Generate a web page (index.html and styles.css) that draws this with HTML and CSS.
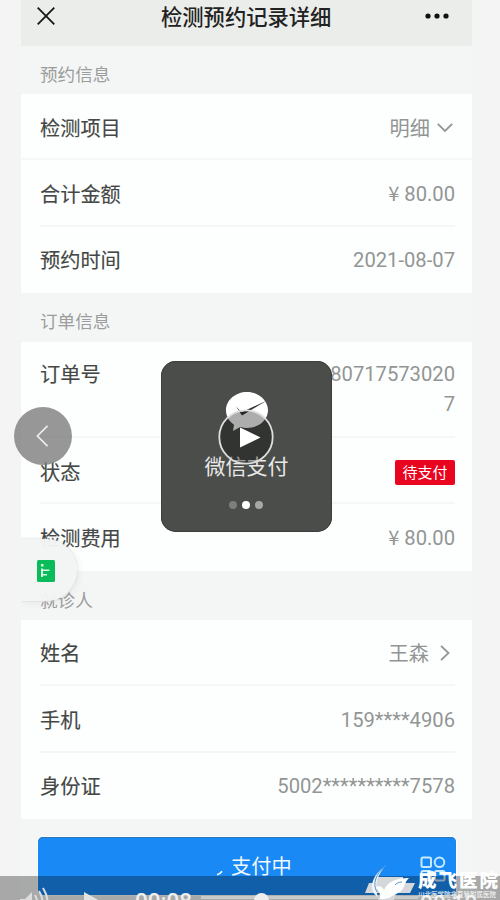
FILE: index.html
```html
<!DOCTYPE html>
<html lang="zh-CN">
<head>
<meta charset="utf-8">
<title>检测预约记录详细</title>
<link rel="stylesheet" href="styles.css">
</head>
<body>
<main class="phone">
  <header class="bar">
    <svg class="close" viewBox="0 0 18 18"><path d="M.7.7 17.3 17.3M17.3.7.7 17.3"/></svg>
    <h1>检测预约记录详细</h1>
    <svg class="more" viewBox="0 0 24 6"><circle cx="3" cy="3" r="2.6"/><circle cx="12" cy="3" r="2.6"/><circle cx="21" cy="3" r="2.6"/></svg>
  </header>
  <h2>预约信息</h2>
  <section class="group">
    <div class="row full"><span class="label">检测项目</span><span class="value cn">明细<svg class="down" viewBox="0 0 16 9"><path d="m.8.8 7.2 7.2L15.2.8"/></svg></span></div>
    <div class="row"><span class="label">合计金额</span><span class="value"><i class="yen">¥</i>80.00</span></div>
    <div class="row"><span class="label">预约时间</span><span class="value">2021-08-07</span></div>
  </section>
  <h2 class="order-head">订单信息</h2>
  <section class="group">
    <div class="row tall"><span class="label">订单号</span><span class="value number">80717573020<br>7</span></div>
    <div class="row"><span class="label">状态</span><span class="tag">待支付</span></div>
    <div class="row"><span class="label">检测费用</span><span class="value"><i class="yen">¥</i>80.00</span></div>
  </section>
  <h2 class="patient-head">就诊人</h2>
  <section class="group">
    <div class="row"><span class="label">姓名</span><span class="value cn">王森<svg class="right" viewBox="0 0 10 16"><path d="m1 .8 7.5 7.2L1 15.2"/></svg></span></div>
    <div class="row"><span class="label">手机</span><span class="value">159****4906</span></div>
    <div class="row"><span class="label">身份证</span><span class="value">5002**********7578</span></div>
  </section>
  <footer>
    <div class="pay">
      <svg class="spin" viewBox="0 0 7 6"><path d="M1 4.8Q4 4 6 1.2"/></svg>
      <span>支付中</span>
      <svg class="apps" viewBox="0 0 26 26"><rect x="1.5" y="1.5" width="9.5" height="9.5" rx="1.5"/><circle cx="19.5" cy="6.3" r="4.8"/><rect x="1.5" y="15" width="9.5" height="9.5" rx="1.5"/><rect x="15" y="15" width="9.5" height="9.5" rx="1.5"/></svg>
    </div>
  </footer>
</main>

<div class="drawer"><svg viewBox="0 0 18 22"><rect width="18" height="22" rx="1.5" fill="#08bd59"/><path d="M4 4h2.500v2.500H4zM4 8.500h2V17H4zM6 9.500h3V11H6zM6 14h4v1.500H6zM8 9.500h4.500V11H8z" fill="#d9f7e4"/></svg></div>

<div class="toast">
  <svg class="chat" viewBox="0 0 44 42"><path d="M22 1C10.400 1 1 9.200 1 19.300c0 6 3 11 8 14.500L8 40l7.200-4c2.200.7 4.400 1 6.800 1 11.600 0 21-7.900 21-17.700S33.600 1 22 1Z" fill="#fff"/><path d="m11 15.500 5.500 5.700L42 9.500 17 24.500Z" fill="#343634"/></svg>
  <span>微信支付</span>
  <div class="dots"><b></b><b></b><b></b></div>
</div>
<div class="play"><svg viewBox="0 0 56 56"><circle cx="28" cy="28" r="26.700" fill="rgba(0,0,0,.32)" stroke="#dedede" stroke-width="1.800"/><path d="M22 18.500 42.500 28.500 22 38.500Z" fill="#fff"/></svg></div>
<div class="prev"><svg viewBox="0 0 14 24"><path d="M13 1 2 12l11 11"/></svg></div>

<div class="player">
  <svg class="sound" viewBox="0 0 30 24"><path d="M1 8h5l7-7v22l-7-7H1Z" fill="#ddd"/><path d="M16 4q4 7 0 14M20 0q7 11 0 22M24-3q9 14 0 28" fill="none" stroke="#ddd" stroke-width="2"/></svg>
  <svg class="mini" viewBox="0 0 16 18"><path d="M0 0 16 9 0 18Z" fill="#e3e3e3"/></svg>
  <span class="time">00:08</span>
  <div class="track"><b class="knob"></b></div>
  <span class="time end">00:10</span>
</div>
<div class="brand">
  <svg viewBox="0 0 50 36"><path d="M13 12h25v6h12l-5 10H31l-2 7H13l2-7H0l4-10h7Z" fill="#d5d8da"/><path d="M21 0C12 7 6 15 7 24c1 4 3 6 6 8-4-11-1-22 8-32Z" fill="#eef5fb"/><path d="M10 22c5-2 7 0 9 3 4-9 13-12 25-12-5 4-4 12-11 15-6 3-10 7-18 6 1-5-1-9-5-12Z" fill="#fff"/><path d="M20 1C11 9 7 19 12 27M30 20c2-2 4-3 7-3" fill="none" stroke="#5c93c5" stroke-width="1"/></svg>
  <div class="words"><strong>成飞医院</strong><small>川北医学院非直管附属医院</small></div>
</div>
</body>
</html>
```
FILE: styles.css
```css
* { box-sizing: border-box; }
body {
  margin: 0;
  width: 500px;
  height: 900px;
  overflow: hidden;
  position: relative;
  background: #f4f4f4;
  font-family: Roboto, "Noto Sans CJK SC", sans-serif;
}
svg { display: block; overflow: visible; flex: none; }
.phone { width: 451px; height: 900px; margin-left: 21px; background: #f4f6f6; overflow: hidden; }
.bar {
  height: 46px;
  padding: 0 23px 14px 16px;
  display: flex;
  align-items: center;
  background: #ebedeb;
}
.close { width: 18px; height: 18px; fill: none; stroke: #181818; stroke-width: 1.8; }
.more { width: 24px; height: 6px; margin-left: auto; fill: #111; }
h1 { margin: 3px 0 0 106px; font-size: 21.3px; line-height: 30px; font-weight: 500; color: #222; }
h2 {
  margin: 0;
  height: 48px;
  padding: 10px 19px 0;
  font-size: 17.6px;
  line-height: 38px;
  font-weight: 400;
  color: #9b9d9c;
}
.order-head { height: 49px; }
.patient-head { height: 49px; padding-top: 11px; }
.group { background: #fdfffe; }
.row {
  height: 66.4px;
  margin: 0 17px 0 19px;
  display: flex;
  align-items: center;
  justify-content: space-between;
  border-bottom: 2px solid #f4f6f7;
  font-size: 20.2px;
  line-height: 30px;
}
.row.full { margin: 0; padding: 0 17px 0 19px; }
.row:last-child { border-bottom-color: transparent; }
.row.tall { height: 95.8px; align-items: flex-start; padding-top: 17px; }
.label { margin: 5px 0 0; color: #444745; font-weight: 400; -webkit-text-stroke: .15px #444745; }
.tall .label { margin-top: 1px; }
.value { display: flex; align-items: center; margin-top: 3px; color: #929594; }
.value.cn { margin-top: 5px; }
.number { display: block; margin-top: 0; text-align: right; }
.yen { font: 20px/30px "Noto Sans CJK SC", sans-serif; margin: -2px 5px 0 0; }
.down { width: 16px; height: 9px; margin: -2px 2px 0 7px; }
.right { width: 10px; height: 16px; margin: -2px 5px 0 11px; }
.down, .right { fill: none; stroke: #929594; stroke-width: 1.8; }
.tag {
  width: 60px;
  height: 25px;
  margin-top: 5px;
  border-radius: 2px;
  background: #e90520;
  color: #fff;
  font-size: 15px;
  line-height: 26px;
  text-align: center;
}
footer { padding: 18px 16px 0 17px; }
.pay {
  height: 58px;
  border-radius: 5px;
  background: #198af5;
  box-shadow: 0 0 0 1px #fff, inset 0 1px #2676bd;
  display: flex;
  align-items: center;
  padding: 0 10px 0 178px;
  color: #f1f8ff;
  font-size: 20.2px;
}
.pay span { margin-left: 8px; }
.spin { width: 7px; height: 6px; margin-top: 14px; fill: none; stroke: #fff; stroke-width: 1.5; }
.apps { width: 26px; height: 26px; margin: 6px 0 0 auto; fill: none; stroke: #c8e9ff; stroke-width: 2; }

.drawer {
  position: absolute;
  left: 21px;
  top: 539px;
  width: 56px;
  height: 62px;
  padding: 21px 0 0 16px;
  border-radius: 0 31px 31px 0;
  background: rgba(243, 245, 244, .96);
  box-shadow: 0 0 2px #ccc, 2px 2px 8px rgba(0, 0, 0, .06);
  clip-path: inset(-4px -12px -12px 0);
}
.drawer svg { width: 18px; height: 22px; }
.toast {
  position: absolute;
  left: 161px;
  top: 361px;
  width: 171px;
  height: 171px;
  padding-top: 30px;
  border-radius: 15px;
  background: #4b4d4a;
  box-shadow: inset 0 0 0 1px #3d3f3d;
  display: flex;
  flex-direction: column;
  align-items: center;
  color: #e8e8e8;
  font-size: 21px;
  line-height: 30px;
}
.chat { width: 44px; height: 42px; }
.toast span { margin-top: 19px; }
.dots { display: flex; gap: 5px; margin: 19px 1px 0 0; }
.dots b { width: 8px; height: 8px; border-radius: 50%; background: #7c7e7c; }
.dots b:nth-child(2) { background: #fff; }
.dots b:nth-child(3) { background: #a6a8a6; }
.play { position: absolute; left: 218px; top: 409px; width: 56px; height: 56px; }
.prev {
  position: absolute;
  left: 14px;
  top: 407px;
  width: 58px;
  height: 58px;
  border-radius: 50%;
  background: rgba(125, 125, 125, .8);
  display: flex;
  align-items: center;
  padding-left: 21px;
}
.prev svg { width: 14px; height: 22px; fill: none; stroke: #eee; stroke-width: 1.8; }
.player {
  position: absolute;
  left: 0;
  top: 876px;
  width: 500px;
  height: 24px;
  padding: 16px 0 0 19px;
  overflow: hidden;
  background: rgba(0, 0, 0, .31);
  display: flex;
  align-items: flex-start;
}
.sound { width: 30px; height: 24px; margin-top: -1px; }
.mini { width: 16px; height: 18px; margin-left: 35px; }
.time { margin: -2px 0 0 35px; font: 500 22.5px/23px Roboto, sans-serif; color: #eee; }
.track { width: 217px; height: 3px; margin: 4px 0 0 9px; padding-left: 53px; background: #c9cbc9; display: flex; }
.knob { width: 15px; height: 15px; margin-top: -3px; border-radius: 50%; background: #eee; flex: none; }
.time.end { margin: 0 0 0 2px; }
.brand { position: absolute; left: 365px; top: 865px; display: flex; }
.brand svg { width: 50px; height: 36px; }
.words { margin-left: 3px; color: #fff; white-space: nowrap; }
.words strong { display: block; height: 23px; margin-top: 5px; font-size: 18.5px; line-height: 22px; letter-spacing: 2px; font-weight: 900; }
.words small { display: block; font-size: 6.5px; line-height: 8px; margin-top: -2px; }
```
